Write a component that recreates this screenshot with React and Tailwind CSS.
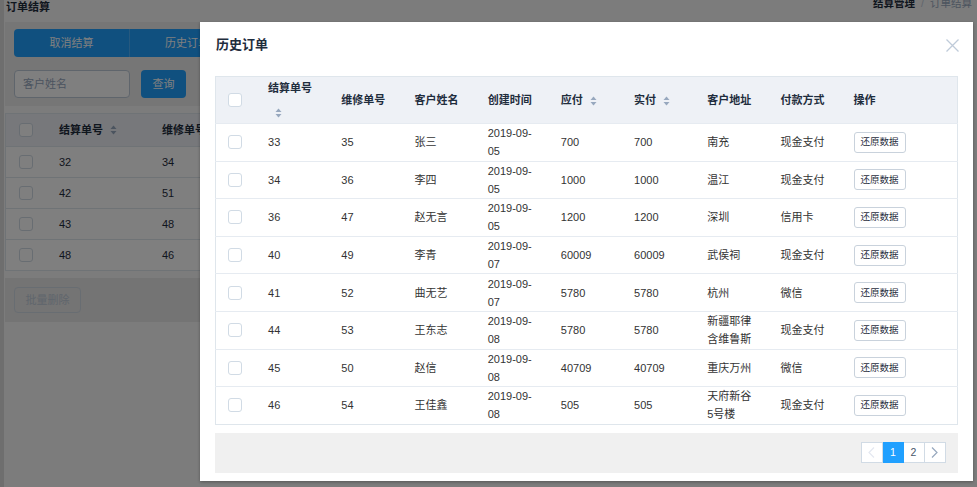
import React from 'react'

const rows = [
  [33, 35, '张三', '2019-09-05', 700, 700, '南充', '现金支付'],
  [34, 36, '李四', '2019-09-05', 1000, 1000, '温江', '现金支付'],
  [36, 47, '赵无言', '2019-09-05', 1200, 1200, '深圳', '信用卡'],
  [40, 49, '李青', '2019-09-07', 60009, 60009, '武侯祠', '现金支付'],
  [41, 52, '曲无艺', '2019-09-07', 5780, 5780, '杭州', '微信'],
  [44, 53, '王东志', '2019-09-08', 5780, 5780, '新疆耶律含维鲁斯', '现金支付'],
  [45, 50, '赵信', '2019-09-08', 40709, 40709, '重庆万州', '微信'],
  [46, 54, '王佳鑫', '2019-09-08', 505, 505, '天府新谷5号楼', '现金支付'],
]

const bgRows = [
  [32, 34],
  [42, 51],
  [43, 48],
  [48, 46],
]

const SortIcon = ({ color = '#97a8be' }) => (
  <svg width="7" height="10" viewBox="0 0 7 10" className="inline-block align-middle">
    <path d="M0.5 4 L3.5 0.5 L6.5 4 Z" fill={color} />
    <path d="M0.5 6 L3.5 9.5 L6.5 6 Z" fill={color} />
  </svg>
)

const Checkbox = () => (
  <span className="block w-[14px] h-[14px] rounded-[3px] border border-[#d1dbe5] bg-white" />
)

const Chevron = ({ dir, color }) => (
  <svg width="7" height="11" viewBox="0 0 7 11">
    <path
      d={dir === 'left' ? 'M6 0.5 L1 5.5 L6 10.5' : 'M1 0.5 L6 5.5 L1 10.5'}
      fill="none"
      stroke={color}
      strokeWidth="1.2"
    />
  </svg>
)

const App = () => {
  const headers = [
    { t: '结算单号', sort: true },
    { t: '维修单号' },
    { t: '客户姓名' },
    { t: '创建时间' },
    { t: '应付', sort: true },
    { t: '实付', sort: true },
    { t: '客户地址' },
    { t: '付款方式' },
    { t: '操作' },
  ]

  return (
    <div
      className="relative w-[977px] h-[487px] overflow-hidden bg-[#f8f8f8] text-[#1f2d3d]"
      style={{ fontFamily: '"Liberation Sans", "Noto Sans CJK SC", sans-serif' }}
    >
      {/* page behind the dialog */}
      <div className="flex h-full">
        <div className="w-[4px] h-full bg-[#dcdcdc]" />
        <div className="flex-1 flex flex-col pl-[1px] pr-[5px]">
          <div className="h-[22px] flex justify-between items-start">
            <div className="pl-[1px] text-[11px] font-bold leading-[14px] text-[#1f2d3d]">订单结算</div>
            <div className="-mt-[4px] text-[10.5px] leading-[14px] flex gap-[6px]">
              <span className="font-bold text-[#1f2d3d]">结算管理</span>
              <span className="text-[#bfcbd9]">/</span>
              <span className="text-[#97a8be]">订单结算</span>
            </div>
          </div>

          <div className="h-[84px] bg-[#ececec] px-[9px] pt-[7px]">
            <div className="flex">
              <button className="w-[115px] h-[28px] bg-[#20a0ff] text-white text-[11px] rounded-l-[4px]">取消结算</button>
              <button className="w-[115px] h-[28px] bg-[#20a0ff] text-white text-[11px] border-l border-[#4db3ff]">历史订单</button>
            </div>
            <div className="flex mt-[13px] gap-[11px]">
              <div className="w-[116px] h-[28px] rounded-[4px] border border-[#bfcbd9] bg-white flex items-center px-[8px] text-[11px] text-[#97a8be]">
                客户姓名
              </div>
              <button className="w-[45px] h-[28px] rounded-[4px] bg-[#20a0ff] text-white text-[11px]">查询</button>
            </div>
          </div>

          <div className="mt-[7px] bg-white border border-[#dfe6ec]">
            <div className="flex h-[32px] items-center bg-[#eef1f6] text-[11px] font-bold">
              <div className="w-[39px] flex justify-center"><Checkbox /></div>
              <div className="w-[103px] pl-[14px] flex items-center gap-[7px]">结算单号<SortIcon /></div>
              <div className="pl-[14px]">维修单号</div>
            </div>
            {bgRows.map((r, i) => (
              <div key={i} className="flex h-[31px] items-center border-t border-[#dfe6ec] text-[11px]">
                <div className="w-[39px] flex justify-center"><Checkbox /></div>
                <div className="w-[103px] pl-[14px]">{r[0]}</div>
                <div className="pl-[14px]">{r[1]}</div>
              </div>
            ))}
          </div>

          <div className="mt-[7px] h-[44px] bg-[#e8e8e8] px-[9px] pt-[9px]">
            <button className="w-[67px] h-[26px] rounded-[4px] border border-[#d1dbe5] text-[11px] text-[#bfcbd9]">批量删除</button>
          </div>
        </div>
      </div>

      {/* mask */}
      <div className="absolute inset-0 bg-black/50" />

      {/* dialog */}
      <div className="absolute left-[200px] top-[22px] w-[773px] h-[459px] bg-white shadow-[0_1px_3px_rgba(0,0,0,0.3)] flex flex-col">
        <div className="h-[46px] flex items-center justify-between pl-[16px] pr-[14px]">
          <div className="text-[13px] font-bold text-[#1f2d3d]">历史订单</div>
          <svg width="13" height="13" viewBox="0 0 13 13">
            <path d="M0.5 0.5 L12.5 12.5 M12.5 0.5 L0.5 12.5" stroke="#bfcbd9" strokeWidth="1.3" />
          </svg>
        </div>

        <div className="px-[15px] pt-[8px]">
          <table className="w-[743px] table-fixed border-collapse border border-[#dfe6ec] text-[11px] text-[#333]">
            <colgroup>
              <col className="w-[38.6px]" />
              {headers.slice(0, 8).map((h, i) => (
                <col key={i} className="w-[73.2px]" />
              ))}
              <col />
            </colgroup>
            <thead>
              <tr className="h-[47px] bg-[#eef1f6]">
                <th className="text-left align-middle">
                  <div className="flex justify-center"><Checkbox /></div>
                </th>
                {headers.map((h) => (
                  <th key={h.t} className="px-[14px] text-left align-middle font-bold leading-[23px] text-[#1f2d3d]">
                    {h.t}
                    {h.sort && (
                      <span className="inline-block ml-[7px] align-middle leading-none">
                        <SortIcon />
                      </span>
                    )}
                  </th>
                ))}
              </tr>
            </thead>
            <tbody>
              {rows.map((r, i) => (
                <tr key={i} className="h-[37.6px] border-t border-[#e6ebf1]">
                  <td className="align-middle">
                    <div className="flex justify-center"><Checkbox /></div>
                  </td>
                  {r.map((c, j) => (
                    <td key={j} className="px-[14px] align-middle leading-[18px]">{c}</td>
                  ))}
                  <td className="px-[14px] align-middle">
                    <button className="w-[52px] h-[21px] rounded-[3px] border border-[#c9d2dc] bg-white text-[9.5px] text-[#1f2d3d]">
                      还原数据
                    </button>
                  </td>
                </tr>
              ))}
            </tbody>
          </table>

          <div className="mt-[8px] h-[40px] bg-[#f0f0f0] flex items-center justify-end pr-[12px]">
            <div className="flex text-[10.5px]">
              <div className="w-[21.5px] h-[21px] border border-[#d1dbe5] bg-white flex items-center justify-center">
                <Chevron dir="left" color="#e4e8f1" />
              </div>
              <div className="w-[21px] h-[21px] bg-[#20a0ff] text-white flex items-center justify-center">1</div>
              <div className="w-[21px] h-[21px] border-y border-r border-[#d1dbe5] bg-white text-[#48576a] flex items-center justify-center">2</div>
              <div className="w-[21.5px] h-[21px] border-y border-r border-[#d1dbe5] bg-white flex items-center justify-center">
                <Chevron dir="right" color="#97a8be" />
              </div>
            </div>
          </div>
        </div>
      </div>
    </div>
  )
}

export default App
